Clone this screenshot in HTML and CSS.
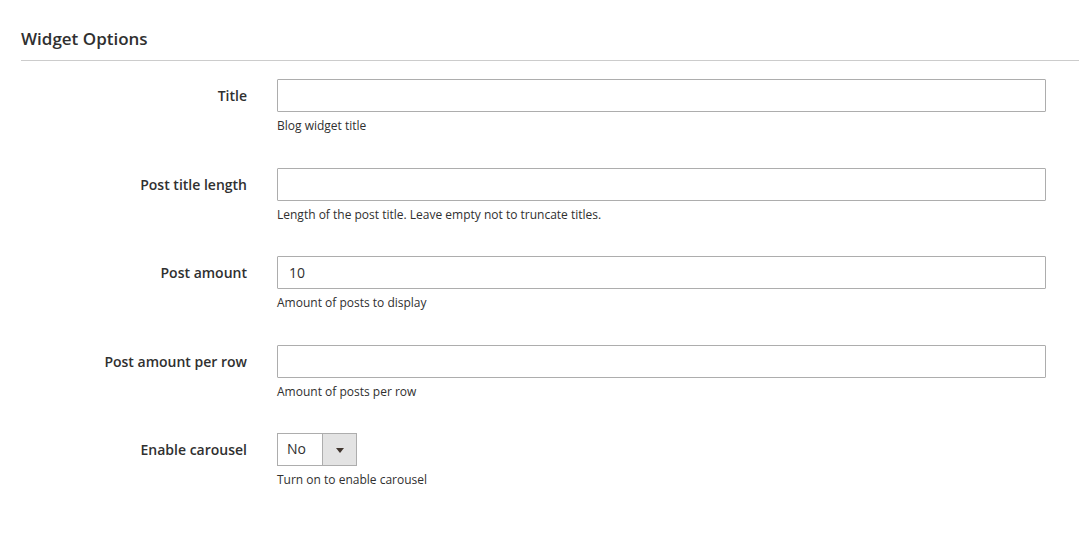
FILE: index.html
```html
<!DOCTYPE html>
<html>
<head>
<meta charset="utf-8">
<link rel="stylesheet" href="styles.css">
</head>
<body>
<div class="page">
  <div class="section-title"><span>Widget Options</span></div>
  <div class="form">
    <div class="field">
      <label class="label">Title</label>
      <div class="control">
        <input class="input" type="text" value="">
        <div class="note">Blog widget title</div>
      </div>
    </div>
    <div class="field">
      <label class="label">Post title length</label>
      <div class="control">
        <input class="input" type="text" value="">
        <div class="note">Length of the post title. Leave empty not to truncate titles.</div>
      </div>
    </div>
    <div class="field">
      <label class="label">Post amount</label>
      <div class="control">
        <input class="input" type="text" value="10">
        <div class="note">Amount of posts to display</div>
      </div>
    </div>
    <div class="field">
      <label class="label">Post amount per row</label>
      <div class="control">
        <input class="input" type="text" value="">
        <div class="note">Amount of posts per row</div>
      </div>
    </div>
    <div class="field">
      <label class="label">Enable carousel</label>
      <div class="control">
        <div class="select">
          <span class="select-value">No</span>
          <span class="select-arrow"><span class="tri"></span></span>
        </div>
        <div class="note">Turn on to enable carousel</div>
      </div>
    </div>
  </div>
</div>
</body>
</html>
```
FILE: styles.css
```css
* { box-sizing: border-box; }
html, body { margin: 0; padding: 0; background: #fff; }
body {
  font-family: "Open Sans", "Noto Sans", "Liberation Sans", sans-serif;
  color: #303030;
}
.page {
  padding: 27px 0 0 21px;
}
.section-title {
  font-size: 17px;
  font-weight: 600;
  color: #303030;
  line-height: 24px;
  padding-bottom: 9px;
  border-bottom: 1px solid #cccccc;
}
.form {
  margin-top: 18px;
  padding-right: 33px;
  display: flex;
  flex-direction: column;
  gap: 32.6px;
}
.field {
  display: grid;
  grid-template-columns: 226px 1fr;
  column-gap: 30px;
}
.label {
  text-align: right;
  font-size: 14px;
  font-weight: 600;
  line-height: 20px;
  padding-top: 7px;
  color: #303030;
}
.control { display: flex; flex-direction: column; align-items: flex-start; }
.input {
  width: 100%;
  height: 33px;
  border: 1px solid #adadad;
  border-radius: 1px;
  padding: 0 11px 1px;
  font-family: inherit;
  font-size: 14px;
  color: #303030;
  background: #fff;
  outline: none;
}
.note {
  margin-top: 5px;
  font-size: 12px;
  line-height: 18px;
  color: #303030;
}
.select {
  display: flex;
  width: 80px;
  height: 33px;
  border: 1px solid #adadad;
  background: #fff;
}
.select-value {
  flex: 1;
  font-size: 14px;
  line-height: 29px;
  padding-left: 9px;
}
.select-arrow {
  width: 34px;
  background: #e3e3e3;
  border-left: 1px solid #adadad;
  display: flex;
  align-items: center;
  justify-content: center;
}
.tri {
  width: 0; height: 0;
  border-left: 4px solid transparent;
  border-right: 4px solid transparent;
  border-top: 5px solid #41362f;
  margin-top: 1px;
}
```
